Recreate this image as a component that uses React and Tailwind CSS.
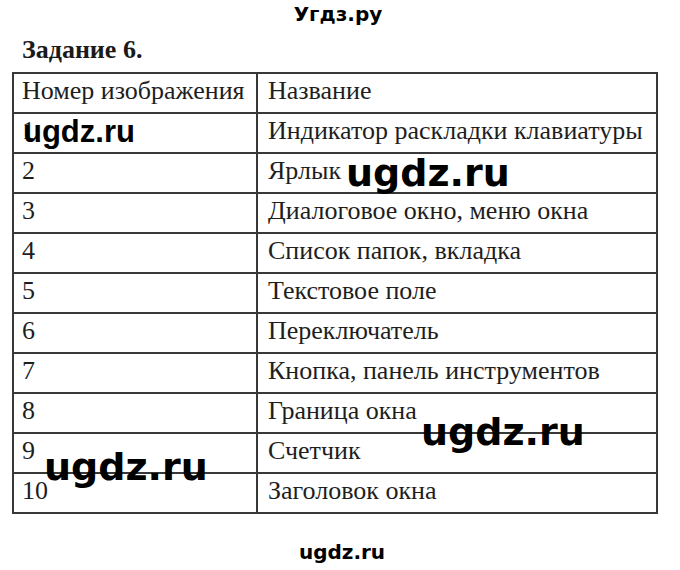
const ROWS = [
  ['Номер изображения', 'Название'],
  ['1', 'Индикатор раскладки клавиатуры'],
  ['2', 'Ярлык'],
  ['3', 'Диалоговое окно, меню окна'],
  ['4', 'Список папок, вкладка'],
  ['5', 'Текстовое поле'],
  ['6', 'Переключатель'],
  ['7', 'Кнопка, панель инструментов'],
  ['8', 'Граница окна'],
  ['9', 'Счетчик'],
  ['10', 'Заголовок окна'],
];

// scanned-page watermarks laid over the table
const MARKS = [
  { cls: "left-[23px] top-[115px] font-['Liberation_Sans',sans-serif] text-[31px] leading-[34px]" },
  { cls: "left-[346px] top-[150px] font-['DejaVu_Sans',sans-serif] text-[38px] leading-[46px]" },
  { cls: "left-[421px] top-[409px] font-['DejaVu_Sans',sans-serif] text-[38px] leading-[46px]" },
  { cls: "left-[44px] top-[444px] font-['DejaVu_Sans',sans-serif] text-[38px] leading-[46px]" },
];

export default function App() {
  return (
    <div className="relative flex h-[570px] w-[680px] flex-col overflow-hidden bg-white text-[#1e1e1e]">
      <div className="flex justify-center pt-[2px] pr-[4px]">
        <span className="font-['DejaVu_Sans',sans-serif] text-[20px] font-bold leading-[24px] text-black">Угдз.ру</span>
      </div>

      <h2 className="mt-[10px] pl-[22px] font-['Liberation_Serif',serif] text-[26px] font-bold leading-[28px] text-[#1a1a1a]">
        Задание 6.
      </h2>

      <div className="mx-[12px] mt-[8px] w-[646px] border-2 border-b-0 border-[#383838] font-['Liberation_Serif',serif]">
        {ROWS.map(([num, name], i) => (
          <div key={i} className="grid h-[40px] grid-cols-[244px_1fr] border-b-2 border-[#383838]">
            <div className="border-r-2 border-[#383838] pl-[8px] pt-[3px] text-[26px] leading-[28px]">{num}</div>
            <div className="pl-[10px] pt-[3px] text-[26px] leading-[28px]">{name}</div>
          </div>
        ))}
      </div>

      <div className="mt-[26px] flex justify-center pl-[4px]">
        <span className="font-['DejaVu_Sans',sans-serif] text-[20px] font-bold leading-[24px] text-black">ugdz.ru</span>
      </div>

      {MARKS.map((m, i) => (
        <span key={i} className={`absolute font-bold text-black ${m.cls}`}>
          ugdz.ru
        </span>
      ))}
    </div>
  );
}
